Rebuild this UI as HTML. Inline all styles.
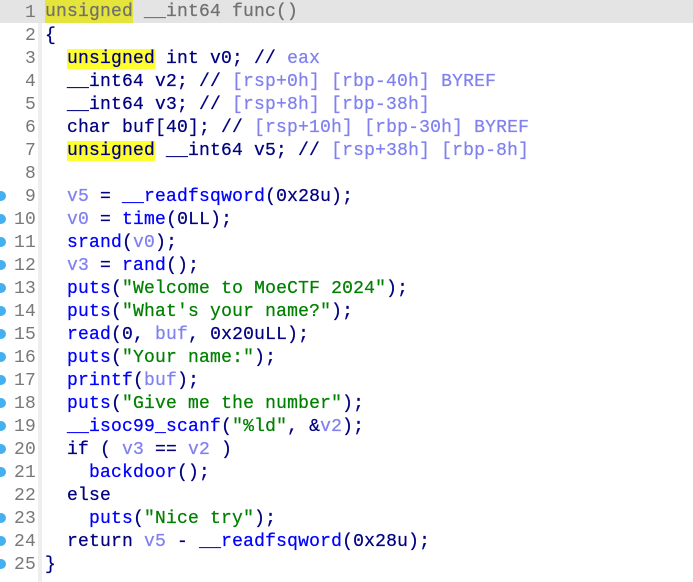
<!DOCTYPE html>
<html><head><meta charset="utf-8"><style>
html,body{margin:0;padding:0;background:#fff;width:693px;height:582px;overflow:hidden}
.l{position:absolute;left:0;width:693px;height:23px;line-height:23px;font-family:"Liberation Mono",monospace;font-size:18px;letter-spacing:0.2px;white-space:pre}
.n{position:absolute;left:0;top:2px;width:36px;text-align:right;color:#787878}
.c{position:absolute;left:45px;top:2px;color:#000080;-webkit-text-stroke:0.25px}
.g{position:absolute;left:38px;top:0;width:4px;height:582px;background:#eeeeee}
.d{position:absolute;left:-4px;width:10px;height:10px;border-radius:50%;background:#45b0f0}
.k{color:#000080}.f{color:#0000ff}.v{color:#8080f0}.s{color:#008000}.m{color:#8080f0}
.y{background:#ffff30}
</style></head><body>
<div class="g"></div>
<div class="l" style="top:0;background:#e4e4e4"><span class="n">1</span><span class="c" style="color:#707070;top:0;line-height:25px"><span style="background:#e4e43a;display:inline-block;height:23px;line-height:25px">unsigned</span> __int64 func()</span></div>
<div class="l" style="top:23px"><span class="n">2</span><span class="c">{</span></div>
<div class="l" style="top:46px"><span class="n">3</span><span class="c">  <span class="y">unsigned</span> int v0; // <span class="m">eax</span></span></div>
<div class="l" style="top:69px"><span class="n">4</span><span class="c">  __int64 v2; // <span class="m">[rsp+0h] [rbp-40h] BYREF</span></span></div>
<div class="l" style="top:92px"><span class="n">5</span><span class="c">  __int64 v3; // <span class="m">[rsp+8h] [rbp-38h]</span></span></div>
<div class="l" style="top:115px"><span class="n">6</span><span class="c">  char buf[40]; // <span class="m">[rsp+10h] [rbp-30h] BYREF</span></span></div>
<div class="l" style="top:138px"><span class="n">7</span><span class="c">  <span class="y">unsigned</span> __int64 v5; // <span class="m">[rsp+38h] [rbp-8h]</span></span></div>
<div class="l" style="top:161px"><span class="n">8</span><span class="c"></span></div>
<div class="l" style="top:184px"><span class="n">9</span><span class="c">  <span class="v">v5</span> = <span class="f">__readfsqword</span>(0x28u);</span></div>
<div class="l" style="top:207px"><span class="n">10</span><span class="c">  <span class="v">v0</span> = <span class="f">time</span>(0LL);</span></div>
<div class="l" style="top:230px"><span class="n">11</span><span class="c">  <span class="f">srand</span>(<span class="v">v0</span>);</span></div>
<div class="l" style="top:253px"><span class="n">12</span><span class="c">  <span class="v">v3</span> = <span class="f">rand</span>();</span></div>
<div class="l" style="top:276px"><span class="n">13</span><span class="c">  <span class="f">puts</span>(<span class="s">"Welcome to MoeCTF 2024"</span>);</span></div>
<div class="l" style="top:299px"><span class="n">14</span><span class="c">  <span class="f">puts</span>(<span class="s">"What's your name?"</span>);</span></div>
<div class="l" style="top:322px"><span class="n">15</span><span class="c">  <span class="f">read</span>(0, <span class="v">buf</span>, 0x20uLL);</span></div>
<div class="l" style="top:345px"><span class="n">16</span><span class="c">  <span class="f">puts</span>(<span class="s">"Your name:"</span>);</span></div>
<div class="l" style="top:368px"><span class="n">17</span><span class="c">  <span class="f">printf</span>(<span class="v">buf</span>);</span></div>
<div class="l" style="top:391px"><span class="n">18</span><span class="c">  <span class="f">puts</span>(<span class="s">"Give me the number"</span>);</span></div>
<div class="l" style="top:414px"><span class="n">19</span><span class="c">  <span class="f">__isoc99_scanf</span>(<span class="s">"%ld"</span>, &amp;<span class="v">v2</span>);</span></div>
<div class="l" style="top:437px"><span class="n">20</span><span class="c">  if ( <span class="v">v3</span> == <span class="v">v2</span> )</span></div>
<div class="l" style="top:460px"><span class="n">21</span><span class="c">    <span class="f">backdoor</span>();</span></div>
<div class="l" style="top:483px"><span class="n">22</span><span class="c">  else</span></div>
<div class="l" style="top:506px"><span class="n">23</span><span class="c">    <span class="f">puts</span>(<span class="s">"Nice try"</span>);</span></div>
<div class="l" style="top:529px"><span class="n">24</span><span class="c">  return <span class="v">v5</span> - <span class="f">__readfsqword</span>(0x28u);</span></div>
<div class="l" style="top:552px"><span class="n">25</span><span class="c">}</span></div>
<div class="d" style="top:191px"></div><div class="d" style="top:214px"></div><div class="d" style="top:237px"></div><div class="d" style="top:260px"></div><div class="d" style="top:283px"></div><div class="d" style="top:306px"></div><div class="d" style="top:329px"></div><div class="d" style="top:352px"></div><div class="d" style="top:375px"></div><div class="d" style="top:398px"></div><div class="d" style="top:421px"></div><div class="d" style="top:444px"></div><div class="d" style="top:467px"></div><div class="d" style="top:513px"></div><div class="d" style="top:536px"></div><div class="d" style="top:559px"></div>
</body></html>
